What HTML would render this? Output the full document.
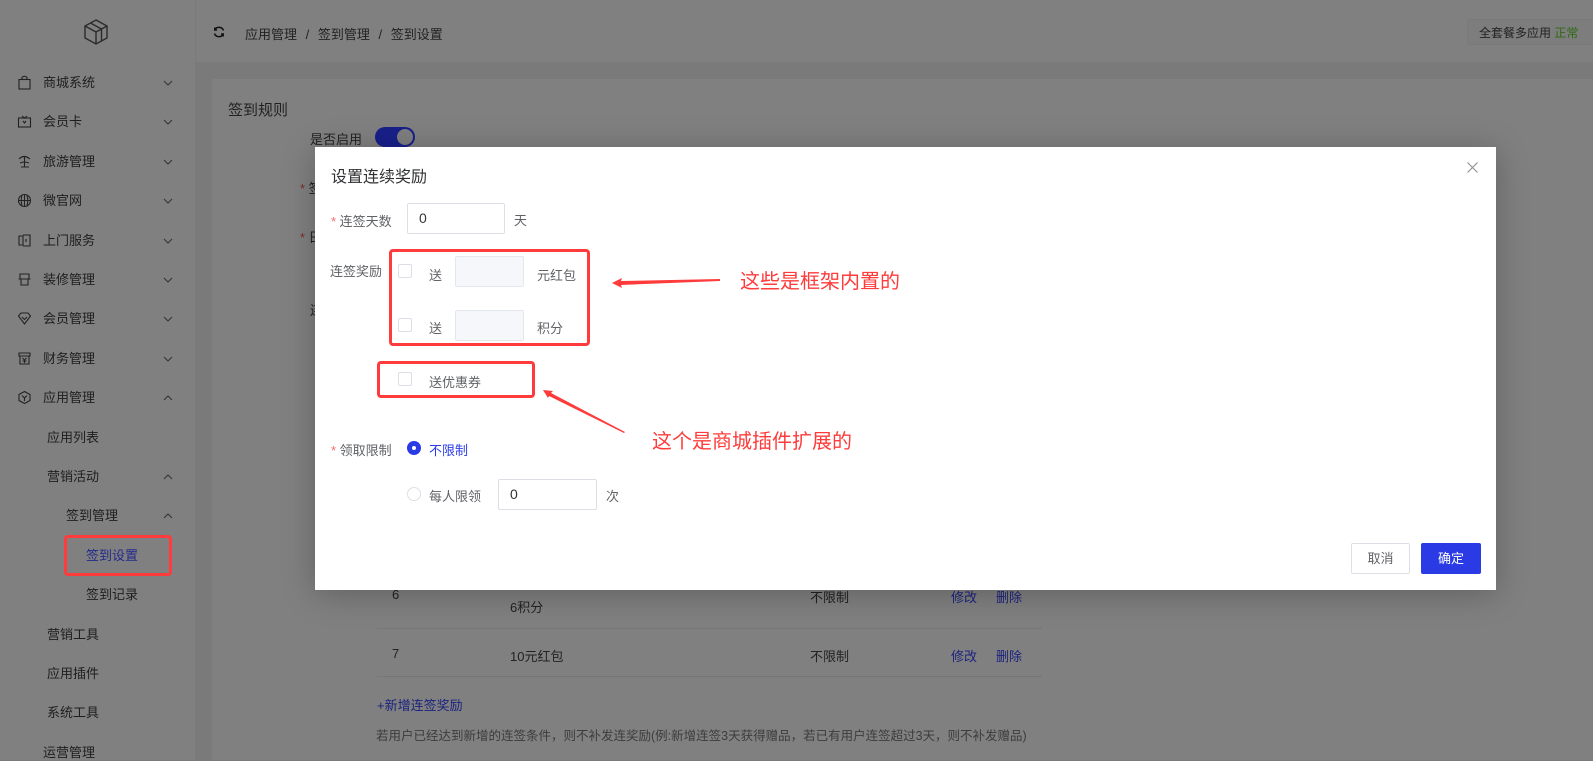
<!DOCTYPE html>
<html><head><meta charset="utf-8"><style>
*{margin:0;padding:0;box-sizing:border-box}
body{width:1593px;height:760px;overflow:hidden;position:relative;background:#7a7a7b;font-family:"Liberation Sans","Noto Sans CJK SC",sans-serif;font-size:13px;color:#222}
.a{position:absolute;white-space:nowrap}
.side{position:absolute;left:0;top:0;width:196px;height:760px;background:#808080;border-right:1px solid #7a7a7a}
.mi{position:absolute;left:43px;font-size:13px;color:#1e1e1e;line-height:16px}
.ic{position:absolute;left:17px;width:15px;height:15px}
.chev{position:absolute;left:163px;width:10px;height:6px}
.head{position:absolute;left:196px;top:0;right:0;height:62px;background:#808080}
.card{position:absolute;left:212px;top:79px;right:0;bottom:0;background:#808080}
.dk{color:#222}
.modal{position:absolute;left:315px;top:147px;width:1181px;height:443px;background:#fff;box-shadow:0 4px 30px rgba(0,0,0,.25)}
.t{color:#606266;font-size:13px}
.inp{position:absolute;border:1px solid #dcdfe6;background:#fff;border-radius:2px}
.cb{position:absolute;width:14px;height:14px;border:1px solid #dcdfe6;border-radius:2px;background:#fff}
.red{position:absolute;border:3px solid #ff3b3b;border-radius:4px}
.star{color:#f56c6c}
</style></head><body>
<div class="side">
<svg class="a" style="left:82px;top:18px" width="28" height="28" viewBox="0 0 28 28" fill="none" stroke="#2a2a2a" stroke-width="1.4"><path d="M14 2 L25 8 V20 L14 26 L3 20 V8 Z M3 8 L14 14 L25 8 M14 14 V26 M8.5 5 L19.5 11 V23"/></svg>
<svg class="ic" style="top:75px" viewBox="0 0 15 15" fill="none" stroke="#222" stroke-width="1.1"><rect x="2" y="4.5" width="11" height="9.5"/><path d="M5 4.5 V2.5 Q7.5 0 10 2.5 V4.5"/></svg>
<div class="mi" style="top:75px">商城系统</div>
<svg class="ic" style="top:114px" viewBox="0 0 15 15" fill="none" stroke="#222" stroke-width="1.1"><rect x="1.5" y="4" width="12" height="9"/><path d="M5 2 L7.5 4 L10 2 M6 7 L7.5 9 L9 7"/></svg>
<div class="mi" style="top:114px">会员卡</div>
<svg class="ic" style="top:154px" viewBox="0 0 15 15" fill="none" stroke="#222" stroke-width="1.1"><path d="M2 5 Q7 0 13 5 M7.5 3 V13 M4 13 H12 M3 9 Q7 7 12 9"/></svg>
<div class="mi" style="top:154px">旅游管理</div>
<svg class="ic" style="top:193px" viewBox="0 0 15 15" fill="none" stroke="#222" stroke-width="1.1"><circle cx="7.5" cy="7.5" r="6"/><path d="M1.5 7.5 H13.5 M7.5 1.5 V13.5 M5 2 Q3.5 7.5 5 13 M10 2 Q11.5 7.5 10 13"/></svg>
<div class="mi" style="top:193px">微官网</div>
<svg class="ic" style="top:233px" viewBox="0 0 15 15" fill="none" stroke="#222" stroke-width="1.1"><path d="M2 3 H6 V12 H2 Z M6 2 H13 V13 H6 M9 6 V9"/></svg>
<div class="mi" style="top:233px">上门服务</div>
<svg class="ic" style="top:272px" viewBox="0 0 15 15" fill="none" stroke="#222" stroke-width="1.1"><path d="M3 2 H12 V7 H3 Z M1.5 7 H13.5 M4 7 V13 H11 V7"/></svg>
<div class="mi" style="top:272px">装修管理</div>
<svg class="ic" style="top:311px" viewBox="0 0 15 15" fill="none" stroke="#222" stroke-width="1.1"><path d="M1.5 5 L4 2 H11 L13.5 5 L7.5 13 Z M5 6 L7.5 8.5 L10 6"/></svg>
<div class="mi" style="top:311px">会员管理</div>
<svg class="ic" style="top:351px" viewBox="0 0 15 15" fill="none" stroke="#222" stroke-width="1.1"><path d="M2 2 H13 V5 H2 Z M3 5 V13 H12 V5 M5.5 7 L7.5 9 L9.5 7 M7.5 9 V12 M5.5 10 H9.5"/></svg>
<div class="mi" style="top:351px">财务管理</div>
<svg class="ic" style="top:390px" viewBox="0 0 15 15" fill="none" stroke="#222" stroke-width="1.1"><path d="M7.5 1.5 L13 4.5 V10.5 L7.5 13.5 L2 10.5 V4.5 Z M5 5.5 L7.5 8 L10 5.5 M7.5 8 V11"/></svg>
<div class="mi" style="top:390px">应用管理</div>
<div class="mi" style="top:430px;left:47px">应用列表</div>
<div class="mi" style="top:469px;left:47px">营销活动</div>
<div class="mi" style="top:508px;left:66px">签到管理</div>
<div class="mi" style="top:548px;left:86px;color:#232a8c">签到设置</div>
<div class="mi" style="top:587px;left:86px">签到记录</div>
<div class="mi" style="top:627px;left:47px">营销工具</div>
<div class="mi" style="top:666px;left:47px">应用插件</div>
<div class="mi" style="top:705px;left:47px">系统工具</div>
<div class="mi" style="top:745px;left:43px">运营管理</div>
<svg class="chev" style="top:80px" viewBox="0 0 10 6" fill="none" stroke="#333"><path d="M1 1 L5 5 L9 1"/></svg>
<svg class="chev" style="top:119px" viewBox="0 0 10 6" fill="none" stroke="#333"><path d="M1 1 L5 5 L9 1"/></svg>
<svg class="chev" style="top:159px" viewBox="0 0 10 6" fill="none" stroke="#333"><path d="M1 1 L5 5 L9 1"/></svg>
<svg class="chev" style="top:198px" viewBox="0 0 10 6" fill="none" stroke="#333"><path d="M1 1 L5 5 L9 1"/></svg>
<svg class="chev" style="top:238px" viewBox="0 0 10 6" fill="none" stroke="#333"><path d="M1 1 L5 5 L9 1"/></svg>
<svg class="chev" style="top:277px" viewBox="0 0 10 6" fill="none" stroke="#333"><path d="M1 1 L5 5 L9 1"/></svg>
<svg class="chev" style="top:316px" viewBox="0 0 10 6" fill="none" stroke="#333"><path d="M1 1 L5 5 L9 1"/></svg>
<svg class="chev" style="top:356px" viewBox="0 0 10 6" fill="none" stroke="#333"><path d="M1 1 L5 5 L9 1"/></svg>
<svg class="chev" style="top:395px" viewBox="0 0 10 6" fill="none" stroke="#333"><path d="M1 5 L5 1 L9 5"/></svg>
<svg class="chev" style="top:474px" viewBox="0 0 10 6" fill="none" stroke="#333"><path d="M1 5 L5 1 L9 5"/></svg>
<svg class="chev" style="top:513px" viewBox="0 0 10 6" fill="none" stroke="#333"><path d="M1 5 L5 1 L9 5"/></svg>
<div class="red" style="left:64px;top:535px;width:108px;height:41px"></div>
</div>
<div class="head">
<svg class="a" style="left:17px;top:26px" width="12" height="12" viewBox="0 0 12 12" fill="none" stroke="#111" stroke-width="1.5"><path d="M10.5 4.5 A4.7 4.7 0 0 0 1.8 4 M1.5 7.5 A4.7 4.7 0 0 0 10.2 8 M1.8 1.5 V4 H4 M10.2 10.5 V8 H8"/></svg>
<div class="a dk" style="left:49px;top:24px;font-size:13px">应用管理 <span style="margin:0 5px">/</span> 签到管理 <span style="margin:0 5px">/</span> 签到设置</div>
<div class="a" style="left:1271px;top:19px;width:140px;height:26px;border:1px solid #7a7a7a;border-radius:3px;background:#7d7d7d"></div>
<div class="a dk" style="left:1283px;top:24px;font-size:12px">全套餐多应用 <span style="color:#2e6b12">正常</span></div>
</div>
<div class="card">
<div class="a dk" style="left:16px;top:20px;font-size:15px">签到规则</div>
<div class="a dk" style="left:98px;top:50px">是否启用</div>
<div class="a" style="left:163px;top:48px;width:40px;height:20px;border-radius:10px;background:#18208a"></div>
<div class="a" style="left:185px;top:50px;width:16px;height:16px;border-radius:8px;background:#7f7f7f"></div>
<div class="a dk" style="left:88px;top:99px"><span style="color:#7a2d2d">*</span> 签</div>
<div class="a dk" style="left:88px;top:148px"><span style="color:#7a2d2d">*</span> 日</div>
<div class="a dk" style="left:98px;top:221px">连</div>
<div class="a dk" style="left:180px;top:508px">6</div>
<div class="a dk" style="left:298px;top:518px">6积分</div>
<div class="a dk" style="left:598px;top:508px">不限制</div>
<div class="a" style="left:739px;top:508px;color:#1c237e">修改</div>
<div class="a" style="left:784px;top:508px;color:#1c237e">删除</div>
<div class="a" style="left:165px;top:549px;width:665px;height:1px;background:#767676"></div>
<div class="a dk" style="left:180px;top:567px">7</div>
<div class="a dk" style="left:298px;top:567px">10元红包</div>
<div class="a dk" style="left:598px;top:567px">不限制</div>
<div class="a" style="left:739px;top:567px;color:#1c237e">修改</div>
<div class="a" style="left:784px;top:567px;color:#1c237e">删除</div>
<div class="a" style="left:165px;top:597px;width:665px;height:1px;background:#767676"></div>
<div class="a" style="left:165px;top:616px;color:#1c237e">+新增连签奖励</div>
<div class="a" style="left:164px;top:646px;color:#3c3c3c;font-size:12.5px">若用户已经达到新增的连签条件，则不补发连奖励(例:新增连签3天获得赠品，若已有用户连签超过3天，则不补发赠品)</div>
</div>

<div class="modal">
<div class="a" style="left:16px;top:16px;font-size:16px;color:#303133">设置连续奖励</div>
<svg class="a" style="left:1152px;top:15px" width="11" height="11" viewBox="0 0 11 11" stroke="#909399" stroke-width="1.2"><path d="M0.5 0.5 L10.5 10.5 M10.5 0.5 L0.5 10.5"/></svg>
<div class="a t" style="left:16px;top:64px"><span class="star">*</span> 连签天数</div>
<div class="inp" style="left:92px;top:56px;width:98px;height:31px"></div>
<div class="a t" style="left:104px;top:63px;color:#333;font-size:14px">0</div>
<div class="a t" style="left:199px;top:63px">天</div>
<div class="a t" style="left:15px;top:114px">连签奖励</div>
<div class="cb" style="left:83px;top:117px"></div>
<div class="a t" style="left:114px;top:118px">送</div>
<div class="inp" style="left:140px;top:109px;width:69px;height:31px;background:#f5f7fa;border-color:#e4e7ed"></div>
<div class="a t" style="left:222px;top:118px">元红包</div>
<div class="cb" style="left:83px;top:171px"></div>
<div class="a t" style="left:114px;top:171px">送</div>
<div class="inp" style="left:140px;top:163px;width:69px;height:31px;background:#f5f7fa;border-color:#e4e7ed"></div>
<div class="a t" style="left:222px;top:171px">积分</div>
<div class="red" style="left:74px;top:102px;width:201px;height:97px"></div>
<div class="cb" style="left:83px;top:225px"></div>
<div class="a t" style="left:114px;top:225px">送优惠券</div>
<div class="red" style="left:62px;top:214px;width:158px;height:37px"></div>
<div class="a t" style="left:16px;top:293px"><span class="star">*</span> 领取限制</div>
<div class="a" style="left:92px;top:294px;width:14px;height:14px;border-radius:7px;background:#2a3be6"></div>
<div class="a" style="left:97px;top:299px;width:4px;height:4px;border-radius:2px;background:#fff"></div>
<div class="a t" style="left:114px;top:293px;color:#2a3be6">不限制</div>
<div class="a" style="left:92px;top:340px;width:14px;height:14px;border-radius:7px;border:1px solid #dcdfe6"></div>
<div class="a t" style="left:114px;top:339px">每人限领</div>
<div class="inp" style="left:183px;top:332px;width:99px;height:31px"></div>
<div class="a t" style="left:195px;top:339px;color:#333;font-size:14px">0</div>
<div class="a t" style="left:291px;top:339px">次</div>
<div class="a" style="left:1036px;top:396px;width:59px;height:31px;border:1px solid #dcdfe6;border-radius:2px;text-align:center;line-height:29px;color:#606266">取消</div>
<div class="a" style="left:1106px;top:396px;width:60px;height:31px;background:#2a3be6;border-radius:2px;text-align:center;line-height:31px;color:#fff">确定</div>
</div>

<svg class="a" style="left:0;top:0" width="1593" height="760" fill="#ff3b3b" stroke="none">
<path d="M612 283 L622 278 L621 281 L720 279 L720 281 L621 285 L622 288 Z"/>
<path d="M543 390 L553 391 L551 393 L625 432 L624 433 L549 396 L548 398 Z"/>
</svg>
<div class="a" style="left:740px;top:265px;font-size:20px;color:#ff3b3b">这些是框架内置的</div>
<div class="a" style="left:652px;top:425px;font-size:20px;color:#ff3b3b">这个是商城插件扩展的</div>
</body></html>
